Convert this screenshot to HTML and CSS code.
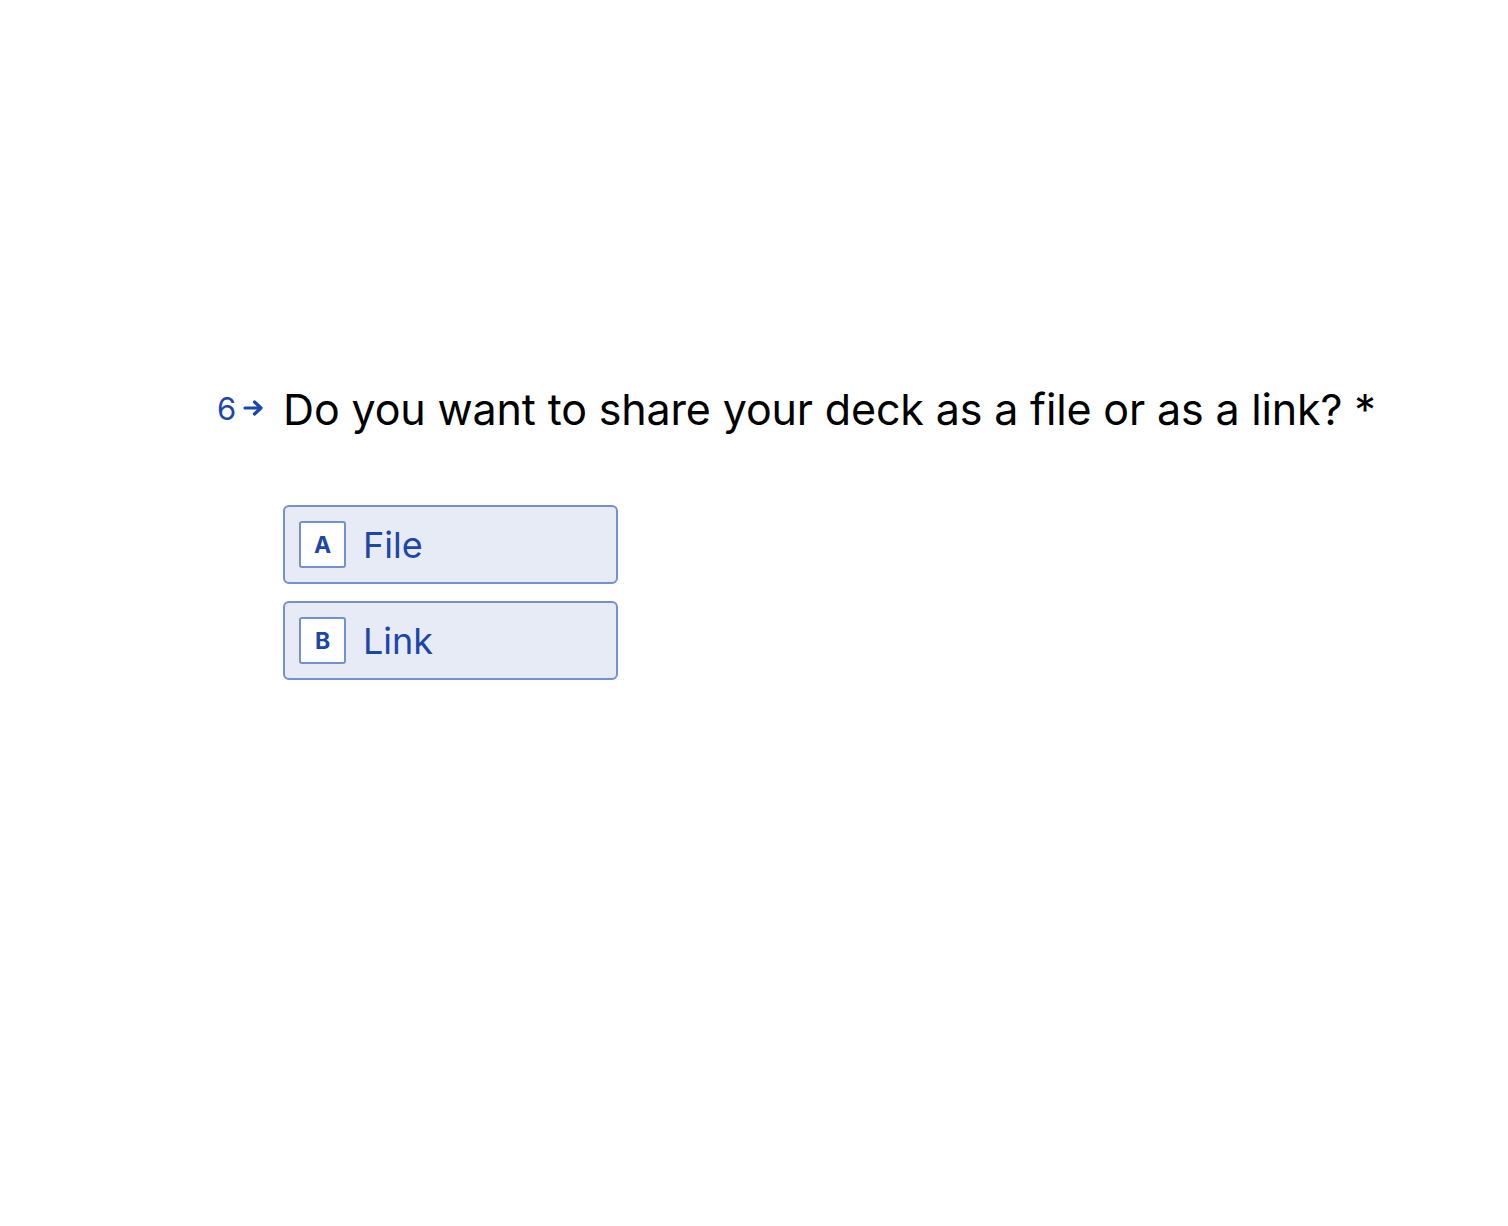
FILE: index.html
```html
<!DOCTYPE html>
<html lang="en">
<head>
<meta charset="utf-8">
<title>Question 6</title>
<link rel="stylesheet" href="styles.css">
</head>
<body>
<main class="page">
  <section class="question">
    <div class="counter">
      <span class="num">6</span>
      <svg class="arrow" width="22" height="18" viewBox="0 0 22 18" aria-hidden="true">
        <path d="M2 9h16M11.5 3l6.5 6-6.5 6" fill="none" stroke="#1c46a8" stroke-width="3.2" stroke-linecap="round" stroke-linejoin="round"/>
      </svg>
    </div>
    <div class="body">
      <h1 class="title">Do you want to share your deck as a file or as a link? *</h1>
      <div class="choices">
        <button class="choice"><span class="key">A</span><span class="label">File</span></button>
        <button class="choice"><span class="key">B</span><span class="label">Link</span></button>
      </div>
    </div>
  </section>
</main>
</body>
</html>
```
FILE: styles.css
```css
html, body {
  margin: 0;
  padding: 0;
  background: #ffffff;
}
body {
  font-family: Inter, "Noto Sans", sans-serif;
  color: #000;
}
.page {
  padding: 381px 0 0 217px;
}
.question {
  display: flex;
  align-items: flex-start;
}
.counter {
  display: flex;
  align-items: center;
  gap: 7px;
  width: 66px;
  height: 56px;
  color: #1c46a8;
}
.num {
  font-size: 31px;
  line-height: 56px;
}
.arrow {
  display: block;
  margin-top: -2px;
}
.title {
  margin: 0;
  font-size: 43px;
  font-weight: 400;
  line-height: 56px;
  letter-spacing: -0.15px;
}
.choices {
  margin-top: 68px;
  display: flex;
  flex-direction: column;
  gap: 17px;
}
.choice {
  display: flex;
  align-items: center;
  gap: 17px;
  width: 335px;
  height: 79px;
  padding: 0 14px;
  box-sizing: border-box;
  background: #e7ebf6;
  border: 2px solid #7390d0;
  border-radius: 6px;
  font-family: inherit;
  text-align: left;
  cursor: pointer;
}
.key {
  display: flex;
  align-items: center;
  justify-content: center;
  width: 47px;
  height: 47px;
  box-sizing: border-box;
  background: #fff;
  border: 2px solid #7390d0;
  border-radius: 3px;
  font-size: 23px;
  font-weight: 700;
  color: #1c46a8;
}
.label {
  font-size: 36px;
  color: #1c46a8;
}
```
